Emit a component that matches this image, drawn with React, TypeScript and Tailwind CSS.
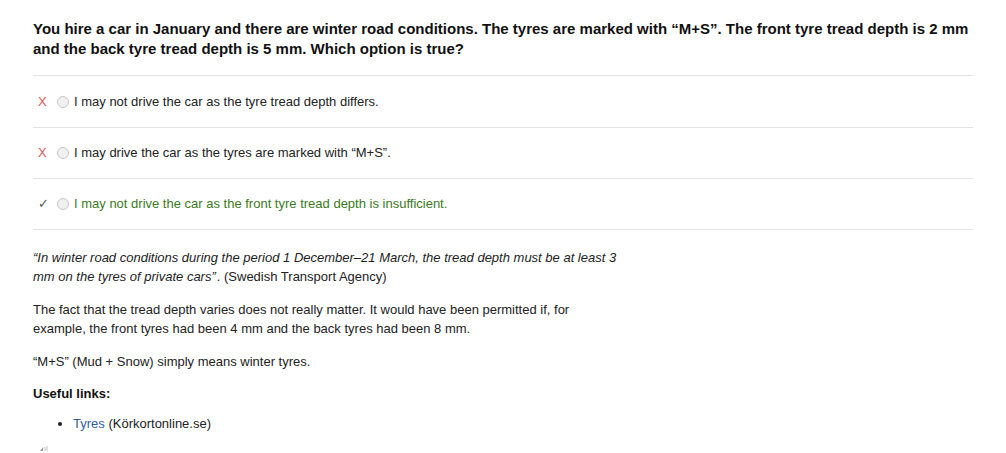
import React from "react";

const Radio = () => (
  <span className="inline-block w-[12px] h-[12px] rounded-full border border-[#c8c8c8] bg-[#f0f0f0] mr-[5px] shrink-0" />
);

const Option = ({ mark, text, correct, first }: { mark: "x" | "v"; text: string; correct?: boolean; first?: boolean }) => (
  <div className={"flex items-center border-b border-[#e3e3e3] pl-[5px] " + (first ? "h-[52px]" : "h-[51px]")}>
    <span
      className={
        "w-[14px] text-[13px] leading-[18px] font-light " +
        (mark === "x" ? "text-[#e0575a]" : "text-[#555]")
      }
    >
      {mark === "x" ? "X" : "✓"}
    </span>
    <span className="ml-[5px] flex items-center">
      <Radio />
    </span>
    <span className={"text-[13px] leading-[18px] " + (correct ? "text-[#3c7a1e]" : "text-[#222]")}>{text}</span>
  </div>
);

export default function App() {
  return (
    <div className="bg-white w-[1006px] h-[453px] overflow-hidden font-['Liberation_Sans',Arial,sans-serif]">
      <div className="pl-[33px] w-[973px]">
        <div className="pt-[19px] pb-[16px] border-b border-[#e3e3e3] text-[15px] leading-[20px] font-bold text-[#111]">
          You hire a car in January and there are winter road conditions. The tyres are marked with “M+S”. The front tyre tread depth is 2 mm and the back tyre tread depth is 5 mm. Which option is true?
        </div>
        <Option mark="x" text="I may not drive the car as the tyre tread depth differs." first />
        <Option mark="x" text="I may drive the car as the tyres are marked with “M+S”." />
        <Option mark="v" text="I may not drive the car as the front tyre tread depth is insufficient." correct />
        <div className="pt-[18px] text-[13px] leading-[19px] text-[#222]">
          <p className="w-[600px]">
            <em>“In winter road conditions during the period 1 December–21 March, the tread depth must be at least 3 mm on the tyres of private cars”</em>
            <span className="ml-[1px]">. (Swedish Transport Agency)</span>
          </p>
          <p className="mt-[14px] w-[570px]">
            The fact that the tread depth varies does not really matter. It would have been permitted if, for example, the front tyres had been 4 mm and the back tyres had been 8 mm.
          </p>
          <p className="mt-[14px]">“M+S” (Mud + Snow) simply means winter tyres.</p>
          <p className="mt-[13px] font-bold text-[#111]">Useful links:</p>
          <ul className="mt-[11px] pl-[40px] list-disc">
            <li>
              <span className="text-[#2f5f9f]">Tyres</span> (Körkortonline.se)
            </li>
          </ul>
          <div className="mt-[10px]">
            <svg width="16" height="10" viewBox="0 0 16 10">
              <path d="M1 8 L7 8 L10 4 L10 8 Z" fill="#9a9a9a" />
              <path d="M12 4 L12 8 M14 3 L14 8" stroke="#c0c0c0" strokeWidth="1" />
            </svg>
          </div>
        </div>
      </div>
    </div>
  );
}
